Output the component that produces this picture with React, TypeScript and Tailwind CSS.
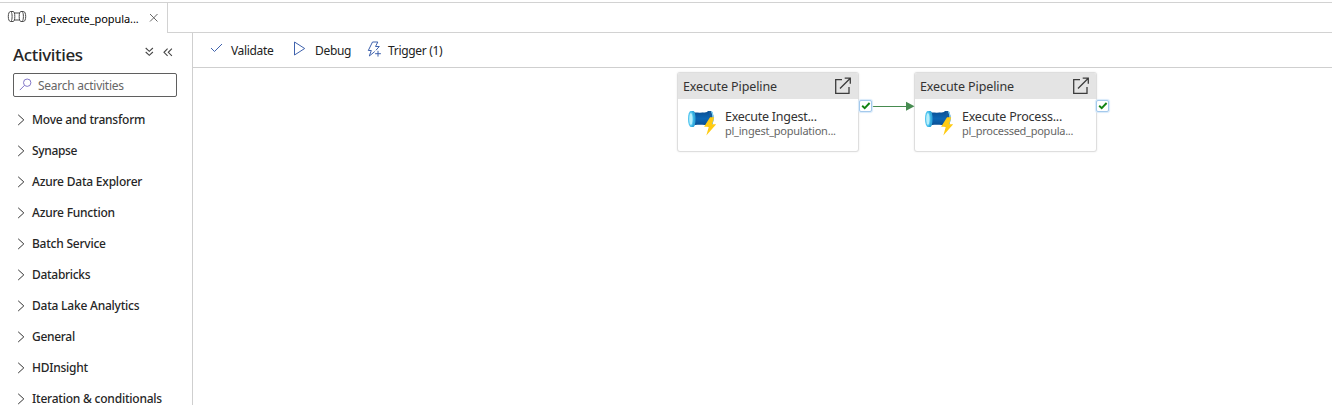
import React from "react";

const activities = [
  { label: "Move and transform", tracking: "tracking-[-0.22px]" },
  { label: "Synapse", tracking: "tracking-[-0.35px]" },
  { label: "Azure Data Explorer", tracking: "tracking-[-0.21px]" },
  { label: "Azure Function", tracking: "tracking-[-0.22px]" },
  { label: "Batch Service", tracking: "tracking-[-0.23px]" },
  { label: "Databricks", tracking: "tracking-[-0.3px]" },
  { label: "Data Lake Analytics", tracking: "tracking-[-0.22px]" },
  { label: "General", tracking: "tracking-[-0.3px]" },
  { label: "HDInsight", tracking: "tracking-[-0.25px]" },
  { label: "Iteration & conditionals", tracking: "tracking-[-0.22px]" },
];

function PipelineTabIcon() {
  return (
    <svg width="20" height="14" viewBox="0 0 20 14" fill="none" stroke="#4a4a4a" strokeWidth="1">
      <path d="M3.500 1.500C2.200 1.500 1.300 3.600 1.300 6.500s.9 5 2.200 5h2.700c1 0 1.600-2.200 1.600-5s-.6-5-1.600-5z" />
      <path d="M3.900 1.600c.9.800 1.200 2.800 1.200 4.900s-.3 4.100-1.200 4.900" />
      <path d="M7.600 3h4.800M7.600 10h4.800" />
      <path d="M16.500 1.500c1.300 0 2.200 2.100 2.200 5s-.9 5-2.200 5h-2.700c-1 0-1.600-2.200-1.600-5s.6-5 1.600-5z" />
      <path d="M15.200 1.600c.9.800 1.200 2.800 1.200 4.900s-.3 4.100-1.200 4.900" />
    </svg>
  );
}

function ExecutePipelineIcon({ id }: { id: string }) {
  return (
    <svg width="30" height="26" viewBox="0 0 30 26">
      <defs>
        <linearGradient id={id} x1="0" y1="0" x2="0" y2="1">
          <stop offset="0" stopColor="#0a4f94" />
          <stop offset="0.5" stopColor="#0b66b5" />
          <stop offset="1" stopColor="#0a4c8f" />
        </linearGradient>
      </defs>
      <path d="M20.500 1h3.500c1.800 1.500 2.500 4 2.500 7s-.7 6.500-2.500 8.500h-3.500z" fill="#155a9c" />
      <path d="M24.500 1.500c1.700 2 2 9 .3 13" stroke="#7fd3f3" strokeWidth="1.200" fill="none" />
      <path d="M5 1.500c3 1.600 12 1.600 17 0v14.500c-5-1.600-14-1.600-17 0z" fill={`url(#${id})`} />
      <path d="M3.500.900h3.200v16H3.500z" fill="#32a9dc" />
      <ellipse cx="6.500" cy="8.900" rx="2" ry="8" fill="#32a9dc" />
      <ellipse cx="3.800" cy="8.900" rx="2.800" ry="8" fill="#50c4ef" />
      <ellipse cx="3.900" cy="8.900" rx="1.700" ry="6" fill="#b7effb" />
      <path d="M23 7.300h4.200l-2.200 7h4.200L19.300 25.400l2.500-8.700h-4.700z" fill="#ffcb13" />
    </svg>
  );
}

function SuccessPort({ place }: { place: string }) {
  return (
    <div className={`absolute z-10 flex h-3 w-[13px] items-center justify-center rounded-[2px] border border-[#a4c9ec] bg-white shadow-[0_0_1px_1px_#d9eafa] ${place}`}>
      <svg width="10" height="10" viewBox="0 0 10 10" fill="none" stroke="#128312" strokeWidth="1.900">
        <path d="M1.200 4.800 3.700 7.200 8.600 2" />
      </svg>
    </div>
  );
}

function PipelineNode({ id, place, name, nameTracking, target, targetTracking }: {
  id: string; place: string; name: string; nameTracking: string; target: string; targetTracking: string;
}) {
  return (
    <div className={`absolute top-[4px] h-[80px] overflow-hidden rounded-[3px] border border-[#dedede] bg-white shadow-[0_0_2px_#e6e6e6] ${place}`}>
      <div className="flex h-[26px] items-center justify-between bg-[#e4e4e4] pl-[5px] pr-[6px]">
        <span className="pt-px text-[12.5px] leading-4 tracking-[-0.1px] whitespace-nowrap text-[#333]">Execute Pipeline</span>
        <svg width="18" height="18" viewBox="0 0 18 18" fill="none" stroke="#3c3c3c" strokeWidth="1.300">
          <path d="M8 2.700H1.700v13.600H15V10M6 11.500 16.300 1.200M10.700 1.200h5.600v5.600" />
        </svg>
      </div>
      <div className="flex pl-[9px] pt-[11px]">
        <ExecutePipelineIcon id={id} />
        <div className="-mt-px ml-[8px] whitespace-nowrap">
          <div className={`text-[12.5px] leading-[16px] text-[#333] ${nameTracking}`}>{name}</div>
          <div className={`-mt-px text-[11px] leading-[13px] text-[#666] ${targetTracking}`}>{target}</div>
        </div>
      </div>
    </div>
  );
}

export default function App() {
  return (
    <div className="flex h-[405px] w-[1332px] flex-col overflow-hidden bg-white font-['Noto_Sans',sans-serif] text-[#262626]">
      <div className="mt-[2px] flex h-[31px] shrink-0 border-t border-[#d2d2d2]">
        <div className="flex w-[168px] items-start border-r border-[#d2d2d2] pl-[7px] pt-[7px]">
          <PipelineTabIcon />
          <span className="ml-[9px] w-[113px] text-[11px] leading-[18px] tracking-[-0.08px] whitespace-nowrap text-black">pl_execute_popula...</span>
          <svg className="mt-[3px]" width="10" height="10" viewBox="0 0 10 10" stroke="#666" strokeWidth="1"><path d="m1 1 7.500 7.500M8.500 1 1 8.500" /></svg>
        </div>
        <div className="flex-1 border-b border-[#d2d2d2]" />
      </div>
      <div className="flex min-h-0 flex-1">
        <aside className="flex w-[193px] shrink-0 flex-col border-r border-[#cfcfcf]">
          <div className="flex h-[40px] shrink-0 items-start pl-[13px] pt-[11px]">
            <h1 className="w-[132px] text-[17px] leading-[22px] font-medium tracking-[-0.35px]">Activities</h1>
            <svg className="mt-[3px]" width="9" height="10" viewBox="0 0 9 10" fill="none" stroke="#444" strokeWidth="1.100"><path d="m.7 1 3.600 3.300L7.900 1M.7 5l3.600 3.300L7.900 5" /></svg>
            <svg className="ml-[9px] mt-[4px]" width="10" height="9" viewBox="0 0 10 9" fill="none" stroke="#444" strokeWidth="1.100"><path d="M4.600.7 1 4.300l3.600 3.600M8.900.7 5.300 4.300l3.600 3.600" /></svg>
          </div>
          <div className="ml-[13px] flex h-[24px] w-[164px] shrink-0 items-center rounded-[2px] border border-[#5f5f5f] pl-[5px]">
            <svg className="mb-px" width="13" height="13" viewBox="0 0 13 13" fill="none" stroke="#8277c8" strokeWidth="1"><circle cx="8.200" cy="4.700" r="3.700" /><path d="M5.500 7.400.8 12.100" /></svg>
            <span className="ml-[6px] pt-[2px] text-[12px] leading-4 tracking-[-0.26px] text-[#666]">Search activities</span>
          </div>
          <nav className="mt-[7px] flex flex-col">
            {activities.map(({ label, tracking }) => (
              <div key={label} className="flex h-[31px] shrink-0 items-center pl-[17px]">
                <svg width="9" height="12" viewBox="0 0 9 12" fill="none" stroke="#333" strokeWidth="1"><path d="m1.200.8 5.600 5.100L1.200 11" /></svg>
                <span className={`ml-[6px] text-[12px] leading-4 font-medium whitespace-nowrap ${tracking}`}>{label}</span>
              </div>
            ))}
          </nav>
        </aside>
        <main className="flex min-w-0 flex-1 flex-col">
          <div className="flex h-[35px] shrink-0 items-center border-b border-[#cfcfcf] pl-[17px] text-[12px] leading-4 whitespace-nowrap text-[#222]">
            <svg className="mb-[4px]" width="13" height="10" viewBox="0 0 13 10" fill="none" stroke="#3f62ad" strokeWidth="1"><path d="m1 5 3.500 3.500L12 1" /></svg>
            <span className="ml-[8px] w-[62px] pt-[2px] tracking-[-0.35px]">Validate</span>
            <svg className="mb-[3px]" width="13" height="15" viewBox="0 0 13 15" fill="none" stroke="#3f62ad" strokeWidth="1"><path d="M1.500 1v13L11.700 7.500z" /></svg>
            <span className="ml-[9px] w-[52px] pt-[2px] tracking-[-0.3px]">Debug</span>
            <svg className="mb-[2px]" width="15" height="17" viewBox="0 0 15 17" fill="none" stroke="#3f62ad" strokeWidth="1"><path d="M7.800 10.500 2.300 15l2-5.500H1.300L5.500 1h5.300L8.500 5.500h3.800L8.900 9.300M11 9.800v5.800M8.100 12.700h5.800" /></svg>
            <span className="ml-[6px] pt-[2px] tracking-[-0.32px]">Trigger (1)</span>
          </div>
          <div className="relative flex-1">
            <PipelineNode id="pipe-ingest" place="left-[484px] w-[182px]" name="Execute Ingest..." nameTracking="tracking-[-0.26px]" target="pl_ingest_population..." targetTracking="tracking-[-0.24px]" />
            <PipelineNode id="pipe-process" place="left-[721px] w-[183px]" name="Execute Process..." nameTracking="tracking-[-0.22px]" target="pl_processed_popula..." targetTracking="tracking-[-0.26px]" />
            <svg className="absolute left-[679px] top-[33px]" width="43" height="10" viewBox="0 0 43 10"><path d="M0 5.500h36" stroke="#468b50" strokeWidth="1" /><path d="M34 .8v9L42.500 5.300z" fill="#468b50" /></svg>
            <SuccessPort place="left-[666px] top-[32px]" />
            <SuccessPort place="left-[903px] top-[32px]" />
          </div>
        </main>
      </div>
    </div>
  );
}
